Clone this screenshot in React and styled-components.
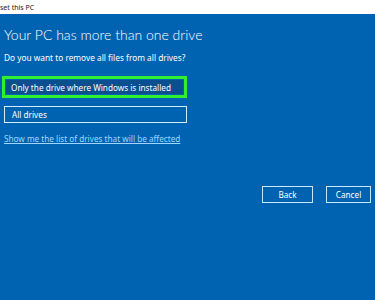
import React from "react";
import styled, { createGlobalStyle } from "styled-components";

const Global = createGlobalStyle`
  html, body { margin: 0; padding: 0; }
  body { width: 375px; height: 300px; overflow: hidden; background: #0063b1; font-family: "Noto Sans", "Open Sans", sans-serif; }
`;

const Window = styled.div`
  width: 375px;
  height: 300px;
  display: flex;
  flex-direction: column;
  background: #0063b1;
  overflow: hidden;
`;

const TitleBar = styled.div`
  height: 14px;
  background: #ffffff;
  display: flex;
  align-items: center;
  overflow: hidden;
`;

const TitleText = styled.span`
  font-size: 7px;
  color: #222;
  white-space: nowrap;
`;

const Content = styled.div`
  display: flex;
  flex-direction: column;
  padding: 12px 2px 0 4px;
  color: #ffffff;
`;

const Heading = styled.h1`
  margin: 0;
  font-family: "Lato", "Noto Sans", sans-serif;
  font-weight: 300;
  font-size: 14px;
  line-height: 18px;
`;

const Question = styled.p`
  margin: 8px 0 0;
  font-size: 8.3px;
  line-height: 12px;
`;

const Options = styled.div`
  display: flex;
  flex-direction: column;
  gap: 8px;
  margin-top: 12px;
  width: 183px;
`;

const Highlight = styled.div`
  margin-left: -2px;
  border: 3px solid #2ef02e;
  padding: 1px;
  width: 177px;
`;

const Option = styled.div`
  height: ${(p) => (p.$selected ? "14px" : "15px")};
  display: flex;
  align-items: center;
  padding-left: ${(p) => (p.$selected ? "5px" : "7px")};
  font-size: 8.2px;
  color: #fff;
  background: ${(p) => (p.$selected ? "#0a4f8f" : "#0063b1")};
  border: ${(p) => (p.$selected ? "none" : "1.5px solid #d5ecff")};
`;

const Link = styled.a`
  margin-top: 9.5px;
  font-size: 8.2px;
  line-height: 12px;
  color: #9fd6ff;
  text-decoration: underline;
  white-space: nowrap;
`;

const Footer = styled.div`
  display: flex;
  justify-content: flex-end;
  gap: 13px;
  margin-top: 41.5px;
  padding-right: 2px;
`;

const Button = styled.div`
  width: ${(p) => p.$w}px;
  height: 15px;
  border: 1.5px solid #c8e8ff;
  display: flex;
  align-items: center;
  justify-content: center;
  font-size: 8.2px;
  color: #fff;
`;

export default function App() {
  return (
    <>
      <Global />
      <Window>
        <TitleBar>
          <TitleText>set this PC</TitleText>
        </TitleBar>
        <Content>
          <Heading>Your PC has more than one drive</Heading>
          <Question>Do you want to remove all files from all drives?</Question>
          <Options>
            <Highlight>
              <Option $selected>Only the drive where Windows is installed</Option>
            </Highlight>
            <Option>All drives</Option>
          </Options>
          <Link>Show me the list of drives that will be affected</Link>
          <Footer>
            <Button $w={49}>Back</Button>
            <Button $w={43}>Cancel</Button>
          </Footer>
        </Content>
      </Window>
    </>
  );
}
